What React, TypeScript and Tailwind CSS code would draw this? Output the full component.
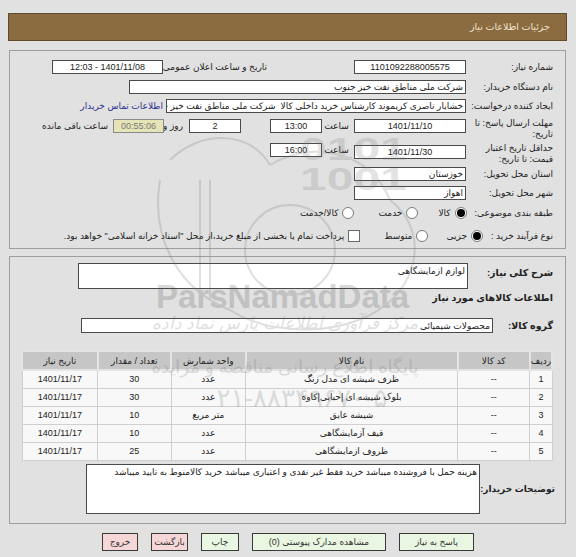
import type { ReactNode } from "react";

const items = [
  { row: "1", code: "--", name: "ظرف شیشه ای مدل زنگ", unit: "عدد", qty: "30", date: "1401/11/17" },
  { row: "2", code: "--", name: "بلوک شیشه ای |حبابی|کاوه", unit: "عدد", qty: "30", date: "1401/11/17" },
  { row: "3", code: "--", name: "شیشه عایق", unit: "متر مربع", qty: "10", date: "1401/11/17" },
  { row: "4", code: "--", name: "قیف آزمایشگاهی", unit: "عدد", qty: "10", date: "1401/11/17" },
  { row: "5", code: "--", name: "ظروف ازمایشگاهی", unit: "عدد", qty: "25", date: "1401/11/17" },
];

function Box({ className, children }: { className: string; children?: ReactNode }) {
  return (
    <div
      className={`h-[14px] shrink-0 border border-[#4a4a4a] bg-white flex items-center overflow-hidden whitespace-nowrap text-[#222] ${className}`}
    >
      {children}
    </div>
  );
}

function Radio({ checked }: { checked?: boolean }) {
  return (
    <span className="w-[12px] h-[12px] shrink-0 rounded-full border border-[#7a7a7a] bg-white flex items-center justify-center">
      {checked && <span className="w-[8px] h-[8px] rounded-full bg-black" />}
    </span>
  );
}

function Label({ children }: { children: ReactNode }) {
  return <span className="w-[83px] shrink-0 text-[#222] whitespace-nowrap">{children}</span>;
}

export default function App() {
  return (
    <div
      dir="rtl"
      className="relative min-h-[557px] w-[576px] bg-[#e1e1e1] pt-[13px] pb-[8px] font-['Liberation_Sans','DejaVu_Sans',sans-serif] text-[9px] leading-[12px] overflow-hidden"
    >
      {/* Header */}
      <div className="ml-[8px] mr-[9px] h-[28px] bg-[#8b6b40] border border-[#5e4a2d] flex items-center pr-[16px] text-[#f1e6cf] text-[9.5px]">
        جزئیات اطلاعات نیاز
      </div>

      {/* Panel 1 */}
      <div className="ml-[9px] mr-[10px] mt-[9px] border border-[#9e9e9e] pr-[12px] pt-[9px] pb-[5px]">
        <div className="flex items-center h-[14px]">
          <Label>شماره نیاز:</Label>
          <Box className="w-[112px] mr-[4px] justify-center">1101092288005575</Box>
          <span className="mr-[87px] w-[99px] whitespace-nowrap text-[#222]">تاریخ و ساعت اعلان عمومی:</span>
          <Box className="w-[111px] mr-[5px] justify-center">1401/11/08 - 12:03</Box>
        </div>

        <div className="flex items-center h-[14px] mt-[6px]">
          <Label>نام دستگاه خریدار:</Label>
          <Box className="w-[337px] mr-[4px] pr-[2px]">شرکت ملی مناطق نفت خیز جنوب</Box>
        </div>

        <div className="flex items-center h-[14px] mt-[5px]">
          <Label>ایجاد کننده درخواست:</Label>
          <Box className="w-[300px] mr-[4px] pr-[2px]">
            خشایار ناصری کریموند کارشناس خرید داخلی کالا&nbsp;&nbsp;شرکت ملی مناطق نفت خیز جنوب
          </Box>
          <span className="mr-[3px] text-[#2b2f8f] whitespace-nowrap">اطلاعات تماس خریدار</span>
        </div>

        <div className="flex items-start h-[22px] mt-[5px]">
          <span className="w-[83px] shrink-0 text-[#222] leading-[11px] whitespace-nowrap">
            مهلت ارسال پاسخ: تا
            <br />
            تاریخ:
          </span>
          <Box className="w-[112px] mr-[4px] mt-[1px] justify-center">1401/11/10</Box>
          <span className="w-[29px] mr-[3px] mt-[2px] text-center text-[#222]">ساعت</span>
          <Box className="w-[52px] mt-[1px] justify-center">13:00</Box>
          <Box className="w-[52px] mr-[29px] mt-[1px] justify-center">2</Box>
          <span className="w-[19px] mr-[6px] mt-[2px] whitespace-nowrap text-[#222]">روز و</span>
          <Box className="w-[51px] mt-[1px] justify-center !bg-[#e4e4b6] !border-[#8a8a8a] !text-[#777]">00:55:06</Box>
          <span className="mr-[5px] mt-[2px] whitespace-nowrap text-[#222]">ساعت باقی مانده</span>
        </div>

        <div className="flex items-start h-[22px] mt-[3px]">
          <span className="w-[83px] shrink-0 text-[#222] leading-[11px] whitespace-nowrap">
            حداقل تاریخ اعتبار
            <br />
            قیمت: تا تاریخ:
          </span>
          <Box className="w-[112px] mr-[4px] mt-[2px] justify-center">1401/11/30</Box>
          <span className="w-[29px] mr-[3px] mt-[1px] text-center text-[#222]">ساعت</span>
          <Box className="w-[52px] justify-center">16:00</Box>
        </div>

        <div className="flex items-center h-[14px] mt-[2px]">
          <Label>استان محل تحویل:</Label>
          <Box className="w-[112px] mr-[4px] pr-[2px]">خوزستان</Box>
        </div>

        <div className="flex items-center h-[14px] mt-[5px]">
          <Label>شهر محل تحویل:</Label>
          <Box className="w-[112px] mr-[4px] pr-[2px]">اهواز</Box>
        </div>

        <div className="flex items-center h-[14px] mt-[6px] text-[#222]">
          <span className="whitespace-nowrap tracking-[-0.4px]">طبقه بندی موضوعی:</span>
          <span className="mr-[8px]"><Radio checked /></span>
          <span className="mr-[4px]">کالا</span>
          <span className="mr-[20px]"><Radio /></span>
          <span className="mr-[4px]">خدمت</span>
          <span className="mr-[24px]"><Radio /></span>
          <span className="mr-[4px]">کالا/خدمت</span>
        </div>

        <div className="flex items-center h-[14px] mt-[9px] text-[#222]">
          <span className="whitespace-nowrap tracking-[-0.4px]">نوع فرآیند خرید :</span>
          <span className="mr-[8px]"><Radio checked /></span>
          <span className="mr-[4px]">جزیی</span>
          <span className="mr-[18px]"><Radio /></span>
          <span className="mr-[4px]">متوسط</span>
          <span className="mr-[24px] w-[12px] h-[12px] border border-[#6a6a6a] bg-white shrink-0" />
          <span className="mr-[4px] whitespace-nowrap">
            پرداخت تمام یا بخشی از مبلغ خرید،از محل "اسناد خزانه اسلامی" خواهد بود.
          </span>
        </div>
      </div>

      {/* Panel 2 */}
      <div className="ml-[9px] mr-[10px] mt-[7px] border border-[#9e9e9e] pr-[12px] pl-[11px] pt-[6px] pb-[9px]">
        <div className="flex items-start">
          <span className="w-[81px] shrink-0 mt-[4px] font-bold text-[9.5px] text-[#222] whitespace-nowrap">شرح کلی نیاز:</span>
          <div className="w-[390px] h-[26px] mr-[4px] border border-[#4a4a4a] bg-white pr-[2px] pt-[1px] text-[#222]">
            لوازم ازمایشگاهی
          </div>
        </div>

        <div className="mt-[2px] h-[14px] flex items-center font-bold text-[9.5px] text-[#222]">اطلاعات کالاهای مورد نیاز</div>

        <div className="flex items-center mt-[13px]">
          <span className="w-[56px] shrink-0 font-bold text-[9.5px] text-[#222] whitespace-nowrap">گروه کالا:</span>
          <Box className="w-[412px] !h-[15px] mr-[4px] pr-[2px]">محصولات شیمیائی</Box>
        </div>

        <table className="mt-[17px] w-[532px] border-collapse text-[#222] text-center">
          <thead>
            <tr className="h-[19px]">
              <th className="w-[20px] bg-[#c6c6c6] border-2 border-[#e4e4e4] font-normal">ردیف</th>
              <th className="w-[73px] bg-[#c6c6c6] border-2 border-[#e4e4e4] font-normal">کد کالا</th>
              <th className="w-[214px] bg-[#c6c6c6] border-2 border-[#e4e4e4] font-normal">نام کالا</th>
              <th className="w-[75px] bg-[#c6c6c6] border-2 border-[#e4e4e4] font-normal">واحد شمارش</th>
              <th className="w-[74px] bg-[#c6c6c6] border-2 border-[#e4e4e4] font-normal">تعداد / مقدار</th>
              <th className="w-[76px] bg-[#c6c6c6] border-2 border-[#e4e4e4] font-normal">تاریخ نیاز</th>
            </tr>
          </thead>
          <tbody>
            {items.map(it => (
              <tr key={it.row} className="h-[18px]">
                <td className="bg-[#f8f8f8] border border-[#cfcfcf]">{it.row}</td>
                <td className="bg-[#f8f8f8] border border-[#cfcfcf]">{it.code}</td>
                <td className="bg-[#f8f8f8] border border-[#cfcfcf]">{it.name}</td>
                <td className="bg-[#f8f8f8] border border-[#cfcfcf]">{it.unit}</td>
                <td className="bg-[#f8f8f8] border border-[#cfcfcf]">{it.qty}</td>
                <td className="bg-[#f8f8f8] border border-[#cfcfcf]">{it.date}</td>
              </tr>
            ))}
          </tbody>
        </table>

        <div className="flex items-center mt-[3px]">
          <span className="w-[75px] shrink-0 -mr-[2px] font-bold text-[9px] text-[#222] whitespace-nowrap">توضیحات خریدار:</span>
          <div className="w-[394px] h-[50px] border border-[#4a4a4a] bg-white pr-[2px] pt-[1px] text-[#222] whitespace-nowrap overflow-hidden">
            هزینه حمل با فروشنده میباشد خرید فقط غیر نقدی و اعتباری میباشد خرید کالامنوط به تایید میباشد
          </div>
        </div>
      </div>

      {/* Buttons */}
      <div className="mt-[9px] flex justify-center gap-[13px] text-[#333]">
        <button className="w-[75px] h-[18px] border border-[#3a3a3a] bg-[#e9f7e2]">پاسخ به نیاز</button>
        <button className="w-[134px] h-[18px] border border-[#3a3a3a] bg-[#e9f7e2]">مشاهده مدارک پیوستی (0)</button>
        <button className="w-[38px] h-[18px] border border-[#3a3a3a] bg-[#e9f7e2]">چاپ</button>
        <button className="w-[37px] h-[18px] border border-[#3a3a3a] bg-[#f6d6d6]">بازگشت</button>
        <button className="w-[36px] h-[18px] border border-[#3a3a3a] bg-[#f6d6d6]">خروج</button>
      </div>

      {/* Watermark */}
      <div className="pointer-events-none absolute inset-0 opacity-[0.2]">
        <svg className="absolute left-[140px] top-[120px]" width="320" height="220" viewBox="0 0 320 220" fill="none" stroke="#666" strokeWidth="2">
          <path d="M30 40 C60 10 110 10 130 45" />
          <path d="M20 60 C10 120 40 170 90 190" />
          <path d="M130 45 C170 20 230 30 250 80" />
          <path d="M250 80 C290 110 280 170 230 195" />
          <path d="M90 190 C130 215 190 215 230 195" />
          <circle cx="150" cy="130" r="45" />
          <path d="M60 60 L60 180" />
          <path d="M70 60 L70 180" />
        </svg>
        <div className="absolute left-[300px] top-[134px] origin-left scale-x-150 font-['Liberation_Sans',sans-serif] font-bold text-[32px] leading-[30px] text-[#777]">
          0101
          <br />
          1001
        </div>
        <div className="absolute left-[156px] top-[280px] font-['Liberation_Sans',sans-serif] font-bold text-[33px] leading-[34px] text-[#444]">
          ParsNamadData
        </div>
        <div className="absolute left-[150px] top-[313px] w-[270px] text-center italic text-[17px] leading-[22px] text-[#666]">
          مرکز فرآوری اطلاعات پارس نماد داده
        </div>
        <div className="absolute left-[150px] top-[355px] w-[270px] text-center text-[18px] leading-[24px] text-[#666]">
          پایگاه اطلاع رسانی مناقصه و مزایده
        </div>
        <div className="absolute left-[180px] top-[383px] w-[230px] text-center text-[26px] leading-[30px] text-[#666]">
          ۰۲۱-۸۸۳۴۹۶۷۰-۵
        </div>
      </div>
    </div>
  );
}
